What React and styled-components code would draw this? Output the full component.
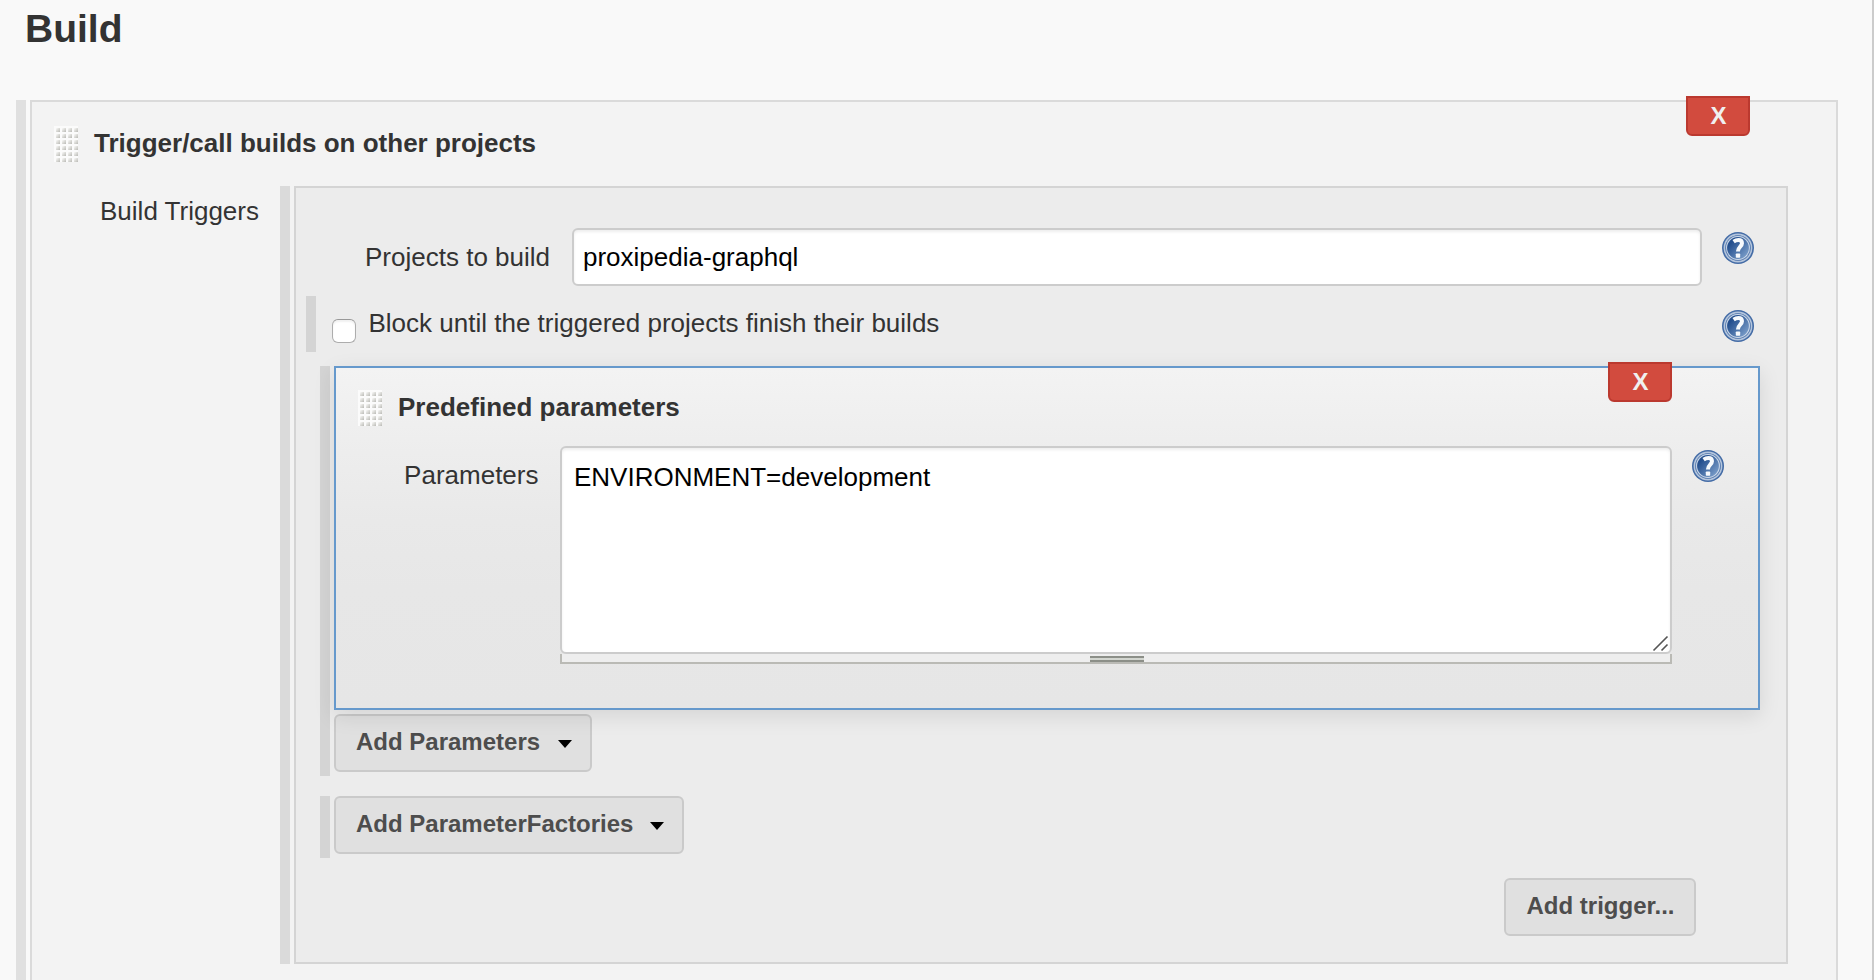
import React from "react";
import styled, { createGlobalStyle } from "styled-components";

const GlobalStyle = createGlobalStyle`
  * { box-sizing: border-box; }
  body {
    margin: 0;
    overflow: hidden;
    background: #f9f9f9;
    color: #333;
    font: 26px/30px "Liberation Sans", Helvetica, Arial, sans-serif;
  }
`;

const Page = styled.main`
  width: 1874px;
  height: 980px;
  overflow: hidden;
  padding: 6px 34px 0 16px;
  border-right: 2px solid #ccc;
`;

const Heading = styled.h1`
  margin: 0 0 48px;
  padding-left: 9px;
  font-size: 39px;
  line-height: 46px;
`;

const Repeated = styled.div`
  flex: 1;
  min-height: ${(p) => p.$height || "auto"};
  padding-left: 4px;
  border-left: 10px solid ${(p) => p.$bar};
  margin: ${(p) => p.$margin || 0};
`;

const Chunk = styled.section`
  position: relative;
  min-height: ${(p) => p.$height};
  border: 2px solid ${(p) => p.$border};
  background: ${(p) => p.$bg};
`;

const ParameterChunk = styled(Chunk)`
  z-index: 1;
  margin-bottom: 4px;
  background: linear-gradient(#f3f3f3, #ededed 25%, #e9e9e9 45%, #e7e7e7 65%, #e6e6e6);
  box-shadow: 0 6px 20px rgba(0, 0, 0, 0.1);
`;

const ChunkHeader = styled.header`
  display: flex;
  gap: 16px;
  height: ${(p) => p.$height};
  margin-top: ${(p) => p.$top};
  padding-left: 22px;
`;

const Title = styled.h2`
  margin: 2px 0 0;
  font-size: 26px;
  line-height: 30px;
`;

const DeleteButton = styled.button`
  position: absolute;
  top: -6px;
  right: 86px;
  width: 64px;
  height: 40px;
  padding: 0 0 1px 1px;
  border: 2px solid #bb392f;
  border-radius: 0 0 6px 6px;
  background: #d24b3e;
  color: #f0f0f0;
  font: bold 24px/28px "Liberation Sans", Arial, sans-serif;
`;

const Row = styled.div`
  display: flex;
  align-items: flex-start;
  padding-right: ${(p) => p.$right || 0};
`;

const Label = styled.label`
  flex: none;
  width: ${(p) => p.$width};
  padding: ${(p) => p.$top} ${(p) => p.$gap || "22px"} 0 0;
  text-align: right;
`;

const FieldSlot = styled.div`
  display: flex;
  flex: 1;
  align-items: flex-start;
  padding-top: 40px;
`;

const TextInput = styled.input`
  flex: 1;
  height: 58px;
  margin-right: 20px;
  padding: 0 9px;
  border: 2px solid #ccc;
  border-radius: 6px;
  background: #fff;
  box-shadow: inset 0 2px 3px rgba(0, 0, 0, 0.07);
  color: #000;
  font: inherit;
`;

const Editor = styled.div`
  position: relative;
  flex: 1;
  margin-right: 20px;
`;

const TextArea = styled.textarea`
  display: block;
  width: 100%;
  height: 208px;
  padding: 14px 12px;
  border: 2px solid #ccc;
  border-radius: 6px;
  background: #fff;
  box-shadow: inset 0 2px 3px rgba(0, 0, 0, 0.07);
  color: #000;
  font: inherit;
  resize: none;
`;

const ResizeBar = styled.div`
  display: flex;
  justify-content: center;
  height: 10px;
  padding-top: 2px;
  border: solid #babab5;
  border-width: 0 2px 2px;
  background: #eee;
`;

const Grip = styled.span`
  width: 54px;
  height: 6px;
  margin-left: 2px;
  border: solid #8c8f88;
  border-width: 2px 0;
  background: #d3d6d0;
`;

const CornerIcon = styled.svg`
  position: absolute;
  right: 3px;
  top: 189px;
`;

const HelpIcon = styled.svg`
  flex: none;
  display: block;
  margin-top: 4px;
`;

const BlockRow = styled.div`
  display: flex;
  align-items: flex-start;
  height: 56px;
  margin: 10px 32px 14px 10px;
  padding-left: 16px;
  border-left: 10px solid #d4d4d4;
`;

const Checkbox = styled.input`
  appearance: none;
  width: 24px;
  height: 24px;
  margin: 23px 12.5px 0 0;
  border: 1.5px solid #adadad;
  border-top-color: #999;
  border-radius: 6px;
  background: #fff;
  box-shadow: inset 0 2px 2px rgba(0, 0, 0, 0.06);
`;

const CheckLabel = styled.label`
  flex: 1;
  padding-top: 12px;
`;

const HelpSlot = styled.div`
  padding-top: 10px;
`;

const Button = styled.button`
  display: flex;
  align-items: flex-start;
  justify-content: space-between;
  width: ${(p) => p.$width};
  height: 58px;
  margin: ${(p) => p.$margin || 0};
  padding: 12px 18px 0 20px;
  border: 2px solid #cacaca;
  border-radius: 6px;
  background: #e0e0e0;
  color: #4d4d4d;
  font: bold 24px/28px "Liberation Sans", Arial, sans-serif;
  white-space: nowrap;
`;

const TriggerButton = styled(Button)`
  padding-left: 20.5px;
`;

const Caret = styled.span`
  margin-top: 12px;
  border: solid transparent;
  border-width: 8px 7px 0;
  border-top-color: #000;
`;

function DragHandle() {
  const id = React.useId();
  return (
    <svg width="24" height="36" viewBox="0 0 24 36">
      <defs>
        <linearGradient id={id} x1="0" y1="0" x2="1" y2="1">
          <stop offset="0.1" stopColor="#f5f5f3" />
          <stop offset="1" stopColor="#b9b9b4" />
        </linearGradient>
      </defs>
      <rect width="24" height="36" fill="#fbfbfb" />
      {Array.from({ length: 24 }, (_, i) => (
        <rect
          key={i}
          x={2 + (i % 4) * 6}
          y={2 + Math.floor(i / 4) * 6}
          width="4"
          height="4"
          fill={`url(#${id})`}
        />
      ))}
    </svg>
  );
}

function Help() {
  const id = React.useId();
  return (
    <HelpIcon width="32" height="32" viewBox="0 0 32 32">
      <defs>
        <linearGradient id={id} x1="0.1" y1="0.2" x2="0.9" y2="0.9">
          <stop offset="0.1" stopColor="#244f8e" />
          <stop offset="1" stopColor="#7a9dc9" />
        </linearGradient>
      </defs>
      <circle cx="16" cy="16" r="16" fill="#446ca6" />
      <circle cx="16" cy="16" r="13.6" fill="none" stroke="#b4c5dc" strokeWidth="1.6" />
      <circle cx="16" cy="16" r="12.6" fill="#6888b7" />
      <circle cx="16" cy="16" r="11.9" fill="#ccd9e9" />
      <circle cx="16" cy="16" r="10.9" fill={`url(#${id})`} />
      <path
        d="M11.6 9.6C13.2 8.5 14.8 8 16.4 8C18.8 8 20 9.3 20 11.2C20 14.5 15.9 14.8 15.9 19.6"
        fill="none"
        stroke="#f6f9fc"
        strokeWidth="4"
      />
      <rect x="13.8" y="21.4" width="4.4" height="4.4" rx="0.8" fill="#f6f9fc" />
    </HelpIcon>
  );
}

export default function App() {
  return (
    <>
      <GlobalStyle />
      <Page>
        <Heading>Build</Heading>
        <Repeated $bar="#e0e0e0">
          <Chunk $height="900px" $border="#dadada" $bg="#f3f3f3">
            <DeleteButton>X</DeleteButton>
            <ChunkHeader $top="24px" $height="60px">
              <DragHandle />
              <Title>Trigger/call builds on other projects</Title>
            </ChunkHeader>
            <Row $right="48px">
              <Label $width="248px" $top="10px" $gap="21px">Build Triggers</Label>
              <Repeated $bar="#dadada">
                <Chunk $height="778px" $border="#d4d4d4" $bg="#ececec">
                  <Row $right="32px">
                    <Label $width="276px" $top="54px">Projects to build</Label>
                    <FieldSlot>
                      <TextInput defaultValue="proxipedia-graphql" />
                      <Help />
                    </FieldSlot>
                  </Row>
                  <BlockRow>
                    <Checkbox type="checkbox" />
                    <CheckLabel>Block until the triggered projects finish their builds</CheckLabel>
                    <HelpSlot>
                      <Help />
                    </HelpSlot>
                  </BlockRow>
                  <Repeated $bar="#d4d4d4" $height="410px" $margin="0 26px 20px 24px">
                    <ParameterChunk $height="344px" $border="#6699cc">
                      <DeleteButton>X</DeleteButton>
                      <ChunkHeader $top="22px" $height="56px">
                        <DragHandle />
                        <Title>Predefined parameters</Title>
                      </ChunkHeader>
                      <Row $right="34px">
                        <Label $width="224px" $top="14px" $gap="21.5px">Parameters</Label>
                        <Editor>
                          <TextArea defaultValue="ENVIRONMENT=development" />
                          <CornerIcon width="17" height="17" viewBox="0 0 17 17">
                            <path
                              d="M1.5 15.5L15.5 1.5M9.5 15.5L15.5 9.5"
                              stroke="#555"
                              strokeWidth="1.6"
                            />
                          </CornerIcon>
                          <ResizeBar>
                            <Grip />
                          </ResizeBar>
                        </Editor>
                        <Help />
                      </Row>
                    </ParameterChunk>
                    <Button $width="258px">
                      Add Parameters
                      <Caret />
                    </Button>
                  </Repeated>
                  <Repeated $bar="#d4d4d4" $height="62px" $margin="0 26px 20px 24px">
                    <Button $width="350px">
                      Add ParameterFactories
                      <Caret />
                    </Button>
                  </Repeated>
                  <TriggerButton $width="192px" $margin="0 90px 0 auto">
                    Add trigger...
                  </TriggerButton>
                </Chunk>
              </Repeated>
            </Row>
          </Chunk>
        </Repeated>
      </Page>
    </>
  );
}
